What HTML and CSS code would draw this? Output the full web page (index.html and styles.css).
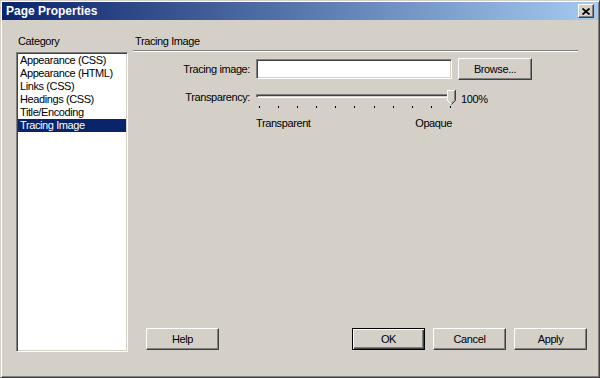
FILE: index.html
```html
<!DOCTYPE html>
<html lang="en">
<head>
  <meta charset="UTF-8">
  <title>Page Properties</title>
  <link rel="stylesheet" href="styles.css">
</head>
<body>

  <!-- Dialog window -->
  <div class="window">
    <div class="titlebar">
      <span class="title">Page Properties</span>
      <button class="close-btn" aria-label="Close">
        <svg width="8" height="7" viewBox="0 0 8 7">
          <path d="M0.5 0.5 L7.5 6.5 M7.5 0.5 L0.5 6.5" stroke="#000" stroke-width="1.7" fill="none"/>
        </svg>
      </button>
    </div>

    <div class="content">
      <!-- Category list -->
      <div class="sidebar">
        <div class="caption">Category</div>
        <ul class="listbox">
          <li>Appearance (CSS)</li>
          <li>Appearance (HTML)</li>
          <li>Links (CSS)</li>
          <li>Headings (CSS)</li>
          <li>Title/Encoding</li>
          <li class="selected">Tracing Image</li>
        </ul>
      </div>

      <!-- Tracing image panel -->
      <div class="panel">
        <div class="caption">Tracing Image</div>
        <div class="separator"></div>

        <div class="form">
          <label class="field-label" for="tracingImage">Tracing image:</label>
          <input class="textbox" type="text" id="tracingImage">
          <button class="btn">Browse...</button>

          <label class="field-label slider-label">Transparency:</label>
          <div class="slider">
            <div class="track"></div>
            <svg class="thumb" width="9" height="15" viewBox="0 0 9 15">
              <path d="M0.5 10.5 V0.5 H8.5 V10.5 L4.5 14.5 Z" fill="#d4d0c8"/>
              <path d="M0.5 10.5 V0.5 H7.5" stroke="#fff" fill="none"/>
              <path d="M0.5 10.5 L4 14" stroke="#fff" fill="none"/>
              <path d="M8.5 0 V10.5 L4.5 14.5" stroke="#404040" fill="none"/>
              <path d="M7.5 1 V10.2 L4.5 13.2" stroke="#808080" fill="none"/>
            </svg>
            <div class="ticks">
              <span></span><span></span><span></span><span></span><span></span><span></span>
              <span></span><span></span><span></span><span></span><span></span>
            </div>
          </div>
          <span class="value">100%</span>

          <span></span>
          <div class="scale">
            <span>Transparent</span>
            <span>Opaque</span>
          </div>
        </div>

        <div class="actions">
          <button class="btn">Help</button>
          <div class="spacer"></div>
          <button class="btn default">OK</button>
          <button class="btn">Cancel</button>
          <button class="btn">Apply</button>
        </div>
      </div>
    </div>
  </div>

</body>
</html>
```

FILE: styles.css
```css
/* Classic dialog look */
body {
  margin: 0;
  background: #d4d0c8;
  font-family: 'Liberation Sans', Arial, sans-serif;
  font-size: 11px;
  letter-spacing: -0.4px;
  color: #000;
}

.window {
  width: 600px;
  height: 378px;
  box-sizing: border-box;
  border: 1px solid;
  border-color: #d4d0c8 #404040 #404040 #d4d0c8;
  box-shadow: inset 1px 1px #fff, inset -1px -1px #808080;
  padding: 1px;
  display: flex;
  flex-direction: column;
}

.titlebar {
  height: 18px;
  display: flex;
  align-items: center;
  justify-content: space-between;
  padding: 0 4px 0 4px;
  background: linear-gradient(to right, #0a246a, #a6caf0);
}

.title {
  color: #fff;
  font-weight: bold;
  font-size: 12px;
  letter-spacing: 0;
}

.close-btn {
  width: 16px;
  height: 14px;
  padding: 0;
  display: flex;
  align-items: center;
  justify-content: center;
  background: #d4d0c8;
  border: 1px solid;
  border-color: #fff #404040 #404040 #fff;
  box-shadow: inset -1px -1px #808080;
}

.content {
  flex: 1;
  display: flex;
  gap: 5px;
  padding: 15px 11px 24px 14px;
}

.caption {
  line-height: 13px;
  padding-left: 2px;
}

/* Category list */
.sidebar {
  width: 112px;
  display: flex;
  flex-direction: column;
}

.listbox {
  flex: 1;
  list-style: none;
  margin: 4px 0 0 0;
  background: #fff;
  border: 1px solid;
  border-color: #808080 #fff #fff #808080;
  box-shadow: inset 1px 1px #404040, inset -1px -1px #d4d0c8;
  padding: 1px;
}

.listbox li {
  line-height: 13px;
  padding-left: 2px;
}

.listbox li.selected {
  background: #0a246a;
  color: #fff;
}

/* Right panel */
.panel {
  flex: 1;
  display: flex;
  flex-direction: column;
}

.separator {
  height: 0;
  margin: 2px 9px 0 0;
  border-top: 1px solid #808080;
  border-bottom: 1px solid #fff;
}

.form {
  margin-top: 6px;
  display: grid;
  grid-template-columns: 117px 196px 74px;
  grid-template-rows: 22px 20px 14px;
  column-gap: 6px;
  row-gap: 8px;
}

.field-label {
  text-align: right;
  align-self: center;
  line-height: 14px;
}

.slider-label {
  align-self: start;
  margin-top: 2px;
}

.textbox {
  align-self: center;
  height: 20px;
  box-sizing: border-box;
  margin: 0;
  border: 1px solid;
  border-color: #808080 #fff #fff #808080;
  box-shadow: inset 1px 1px #404040, inset -1px -1px #d4d0c8;
  background: #fff;
}

.btn {
  height: 22px;
  padding: 0;
  background: #d4d0c8;
  font-family: inherit;
  font-size: 11px;
  letter-spacing: -0.4px;
  color: #000;
  border: 1px solid;
  border-color: #fff #404040 #404040 #fff;
  box-shadow: inset -1px -1px #808080;
}

.btn.default {
  border-color: #000;
  box-shadow: inset 1px 1px #fff, inset -1px -1px #404040, inset -2px -2px #808080;
}

/* Transparency slider */
.slider {
  position: relative;
}

.track {
  margin-top: 6px;
  height: 2px;
  border: 1px solid;
  border-color: #808080 #fff #fff #808080;
  box-shadow: inset 1px 1px #404040;
}

.thumb {
  position: absolute;
  left: 191px;
  top: 2px;
}

.ticks {
  display: flex;
  justify-content: space-between;
  padding: 0 1px 0 3px;
  margin-top: 8px;
}

.ticks span {
  width: 1px;
  height: 2px;
  background: #000;
}

.value {
  padding-left: 3px;
  margin-top: 4px;
  line-height: 14px;
}

.scale {
  display: flex;
  justify-content: space-between;
  line-height: 14px;
}

/* Dialog buttons */
.actions {
  margin-top: auto;
  margin-bottom: 2px;
  display: flex;
  gap: 8px;
  padding-left: 13px;
}

.actions .btn {
  width: 73px;
}

.spacer {
  flex: 1;
}
```
